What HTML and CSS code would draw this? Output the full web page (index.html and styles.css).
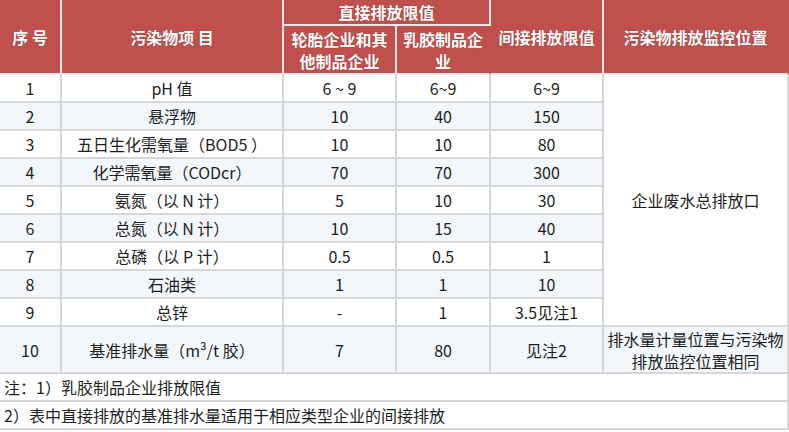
FILE: index.html
```html
<!DOCTYPE html>
<html lang="zh-CN">
<head>
<meta charset="utf-8">
<title>排放限值</title>
<link rel="stylesheet" href="styles.css">
</head>
<body>
<table class="limits">
  <colgroup>
    <col class="c1"><col class="c2"><col class="c3"><col class="c4"><col class="c5"><col class="c6">
  </colgroup>
  <thead>
    <tr class="h1">
      <th rowspan="2">序 号</th>
      <th rowspan="2">污染物项 目</th>
      <th colspan="2">直接排放限值</th>
      <th rowspan="2">间接排放限值</th>
      <th rowspan="2">污染物排放监控位置</th>
    </tr>
    <tr class="h2">
      <th>轮胎企业和其他制品企业</th>
      <th>乳胶制品企业</th>
    </tr>
  </thead>
  <tbody>
    <tr><td>1</td><td>pH 值</td><td>6 ~ 9</td><td>6~9</td><td>6~9</td><td rowspan="9" class="loc">企业废水总排放口</td></tr>
    <tr class="alt"><td>2</td><td>悬浮物</td><td>10</td><td>40</td><td>150</td></tr>
    <tr><td>3</td><td>五日生化需氧量（BOD5 ）</td><td>10</td><td>10</td><td>80</td></tr>
    <tr class="alt"><td>4</td><td>化学需氧量（CODcr）</td><td>70</td><td>70</td><td>300</td></tr>
    <tr><td>5</td><td>氨氮（以 N 计）</td><td>5</td><td>10</td><td>30</td></tr>
    <tr class="alt"><td>6</td><td>总氮（以 N 计）</td><td>10</td><td>15</td><td>40</td></tr>
    <tr><td>7</td><td>总磷（以 P 计）</td><td>0.5</td><td>0.5</td><td>1</td></tr>
    <tr class="alt"><td>8</td><td>石油类</td><td>1</td><td>1</td><td>10</td></tr>
    <tr><td>9</td><td>总锌</td><td>-</td><td>1</td><td>3.5见注1</td></tr>
    <tr class="alt tall"><td>10</td><td>基准排水量（m³/t 胶）</td><td>7</td><td>80</td><td>见注2</td><td class="loc2">排水量计量位置与污染物排放监控位置相同</td></tr>
    <tr class="note"><td colspan="6">注：1）乳胶制品企业排放限值</td></tr>
    <tr class="note"><td colspan="6">2）表中直接排放的基准排水量适用于相应类型企业的间接排放</td></tr>
  </tbody>
</table>
</body>
</html>
```

FILE: styles.css
```css
html, body {
  margin: 0;
  padding: 0;
  background: #ffffff;
}

.limits {
  width: 789px;
  table-layout: fixed;
  border-collapse: separate;
  border-spacing: 0;
  font-family: "Noto Sans CJK SC", "Noto Sans", sans-serif;
  color: #1e1e1e;
}

.c1 { width: 62px; }
.c2 { width: 222px; }
.c3 { width: 113px; }
.c4 { width: 94px; }
.c5 { width: 113px; }
.c6 { width: 185px; }

.limits th {
  background: #c0504d;
  color: #ffffff;
  font-weight: bold;
  font-size: 16px;
  line-height: 22px;
  padding: 0 4px;
  border-right: 2px solid #f4e6e6;
  border-bottom: 2px solid #f4e6e6;
  text-align: center;
  vertical-align: middle;
  text-shadow: 0 0 1px #7a2a28;
}

.limits thead th:last-child { border-right: 2px solid #c0504d; }

.h1 th { height: 24px; }
.h2 th { height: 47px; }

.limits td {
  font-size: 16px;
  line-height: 22px;
  height: 28px;
  padding: 0 2px;
  text-align: center;
  vertical-align: middle;
  border-right: 2px solid #d6d6d6;
  border-bottom: 2px solid #d6d6d6;
  background: #ffffff;
  box-sizing: border-box;
}

.limits tr.alt td { background: #f3f7fb; }
.limits td.loc { background: #ffffff; }

.limits tr.tall td { height: 47px; }

.note td {
  text-align: left;
  padding-left: 4px;
}
```
